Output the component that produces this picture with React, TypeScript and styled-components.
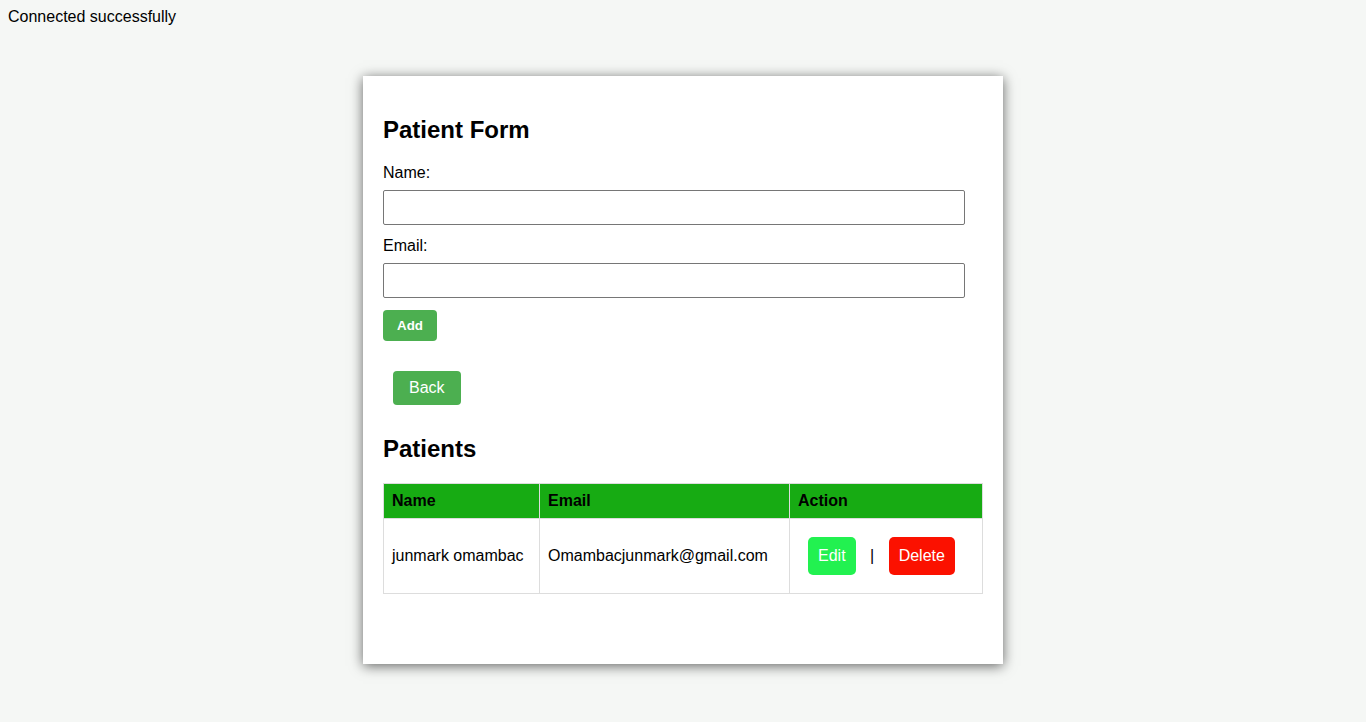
import React, { useState } from 'react';
import styled, { createGlobalStyle } from 'styled-components';

const GlobalStyle = createGlobalStyle`
  body {
    margin: 8px;
    background-color: #f5f7f5;
    font-family: 'Liberation Sans', Arial, sans-serif;
    color: #000;
  }
`;

const Page = styled.div`
  padding-bottom: 50px;
`;

const Status = styled.div`
  font-size: 16px;
  line-height: 18px;
`;

const Card = styled.div`
  width: 600px;
  margin: 50px auto 0;
  padding: 20px 20px 70px;
  background-color: #fff;
  box-shadow: 0 2px 12px rgba(0, 0, 0, 0.6);
`;

const Heading = styled.h2`
  font-size: 24px;
  font-weight: bold;
  margin: 20px 0;
`;

const Form = styled.form`
  display: flex;
  flex-direction: column;
  align-items: flex-start;
  margin-bottom: 20px;
`;

const Label = styled.label`
  display: block;
  font-size: 16px;
  margin-bottom: 8px;
`;

const Input = styled.input`
  width: 582px;
  box-sizing: border-box;
  height: 35px;
  padding: 8px;
  margin-bottom: 12px;
  border: 1px solid #767676;
  border-radius: 2px;
  font-family: inherit;
  font-size: 16px;
`;

const AddButton = styled.button`
  padding: 8px 14px;
  border: none;
  border-radius: 4px;
  background-color: #4caf50;
  color: #fff;
  font-family: inherit;
  font-size: 13.333px;
  font-weight: bold;
  line-height: 15px;
  height: 31px;
  cursor: pointer;
`;

const BackRow = styled.div`
  margin-bottom: 0;
`;

const BackButton = styled.button`
  display: inline-block;
  margin: 10px;
  padding: 8px 16px;
  border: none;
  border-radius: 4px;
  background-color: #4caf50;
  color: #fff;
  font-family: inherit;
  font-size: 16px;
  line-height: 18px;
  vertical-align: top;
  cursor: pointer;
`;

const Table = styled.table`
  width: 600px;
  border-collapse: collapse;
  font-size: 16px;
`;

const HeadCell = styled.th`
  background-color: #17ab13;
  border: 1px solid #ddd;
  padding: 8px;
  text-align: left;
  font-weight: bold;
  line-height: 18px;
`;

const Cell = styled.td`
  border: 1px solid #ddd;
  padding: 8px;
  line-height: 18px;
`;

const ActionButton = styled.button<{ $tone: 'edit' | 'delete' }>`
  display: inline-block;
  margin: 10px;
  padding: 10px;
  border: none;
  border-radius: 5px;
  background-color: ${(p) => (p.$tone === 'edit' ? '#22f150' : '#fb1100')};
  color: #fff;
  font-family: inherit;
  font-size: 16px;
  line-height: 18px;
  cursor: pointer;
`;

interface Patient {
  name: string;
  email: string;
}

const App: React.FC = () => {
  const [patients] = useState<Patient[]>([
    { name: 'junmark omambac', email: 'Omambacjunmark@gmail.com' },
  ]);

  return (
    <Page>
      <GlobalStyle />
      <Status>Connected successfully</Status>
      <Card>
        <Heading>Patient Form</Heading>
        <Form onSubmit={(e) => e.preventDefault()}>
          <Label htmlFor="name">Name:</Label>
          <Input id="name" type="text" />
          <Label htmlFor="email">Email:</Label>
          <Input id="email" type="email" />
          <AddButton type="submit">Add</AddButton>
        </Form>
        <BackRow>
          <BackButton>Back</BackButton>
        </BackRow>
        <Heading>Patients</Heading>
        <Table>
          <thead>
            <tr>
              <HeadCell style={{ width: 139 }}>Name</HeadCell>
              <HeadCell style={{ width: 233 }}>Email</HeadCell>
              <HeadCell>Action</HeadCell>
            </tr>
          </thead>
          <tbody>
            {patients.map((p) => (
              <tr key={p.email}>
                <Cell>{p.name}</Cell>
                <Cell>{p.email}</Cell>
                <Cell>
                  <ActionButton $tone="edit">Edit</ActionButton> | <ActionButton $tone="delete">Delete</ActionButton>
                </Cell>
              </tr>
            ))}
          </tbody>
        </Table>
      </Card>
    </Page>
  );
};

export default App;
